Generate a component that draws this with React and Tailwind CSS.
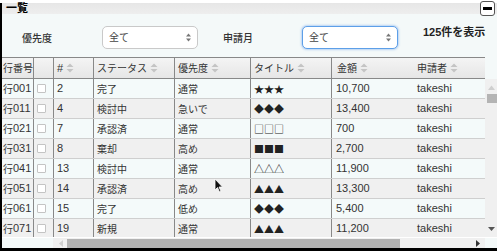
import React from "react";

const FONT = { fontFamily: '"Liberation Sans", "Noto Sans CJK JP", sans-serif' };
const CJK = { fontFamily: '"Noto Sans CJK JP", sans-serif' };

function SortIcon() {
  return (
    <svg width="8" height="10" viewBox="0 0 8 10" className="ml-[3px] shrink-0">
      <polygon points="0.5,4 4,0.5 7.5,4" fill="#c4c4c4" />
      <polygon points="0.5,6 4,9.5 7.5,6" fill="#c4c4c4" />
    </svg>
  );
}

function SelectBox({ focused }) {
  return (
    <div
      className={
        "w-[96px] h-[23px] rounded-[5px] bg-white flex items-center justify-between pl-[6px] pr-[6px] " +
        (focused
          ? "border border-[#5d9fe8] shadow-[0_0_2px_1px_rgba(110,165,235,0.45)]"
          : "border border-[#c9c9c9]")
      }
    >
      <span className="text-[10px] text-[#444]">全て</span>
      <svg width="5" height="9" viewBox="0 0 5 9">
        <polygon points="0,3.5 2.5,0.5 5,3.5" fill="#777" />
        <polygon points="0,5.5 2.5,8.5 5,5.5" fill="#777" />
      </svg>
    </div>
  );
}

const rows = [
  ["行001", "2", "完了", "通常", "★★★", "10,700"],
  ["行011", "4", "検討中", "急いで", "◆◆◆", "13,400"],
  ["行021", "7", "承認済", "通常", "□□□", "700"],
  ["行031", "8", "棄却", "高め", "■■■", "2,700"],
  ["行041", "13", "検討中", "通常", "△△△", "11,900"],
  ["行051", "14", "承認済", "高め", "▲▲▲", "13,300"],
  ["行061", "15", "完了", "低め", "◆◆◆", "5,400"],
  ["行071", "19", "新規", "通常", "▲▲▲", "11,200"],
];

export default function App() {
  return (
    <div
      className="w-[497px] h-[251px] bg-black flex flex-col overflow-hidden relative text-[#333] whitespace-nowrap"
      style={FONT}
    >
      <div className="h-[3px] bg-white shrink-0" />
      <div className="ml-[2px] h-[244px] bg-[#f4f9f9] flex flex-col relative">
        {/* title bar */}
        <div className="h-[11px] bg-gradient-to-b from-[#e6e6e6] to-[#eeeeee] flex items-center pl-[4px] shrink-0">
          <span className="text-[11px] font-bold leading-none text-black">一覧</span>
        </div>
        {/* minimize button */}
        <div className="absolute right-[2px] top-[-2px] w-[15px] h-[15px] rounded-[3px] border border-[#555] bg-white flex items-center justify-center">
          <div className="w-[9px] h-[3px] bg-black" />
        </div>

        {/* filters */}
        <div className="h-[43px] flex items-start pt-[12px] pl-[20px] shrink-0">
          <div className="w-[80px] h-[23px] flex items-center text-[10px] font-medium text-[#333]" style={CJK}>優先度</div>
          <SelectBox />
          <div className="ml-[25px] w-[79px] h-[23px] flex items-center text-[10px] font-medium text-[#333]" style={CJK}>申請月</div>
          <SelectBox focused />
          <div className="ml-[25px] text-[11px] font-bold leading-[12px] text-[#222]">125件を表示</div>
        </div>

        {/* table */}
        <div className="flex flex-col flex-1 min-h-0">
          {/* header */}
          <div className="flex shrink-0">
            <div className="w-[483px] h-[20px] flex border-t border-b border-[#888] bg-gradient-to-b from-[#f4f4f4] to-[#e6e6e6] text-[10px] box-content">
              <div className="w-[32px] border-r border-[#888] flex items-center pl-[1px]">行番号</div>
              <div className="w-[20px] border-r border-[#888]" />
              <div className="w-[40px] border-r border-[#888] flex items-center pl-[3px] text-[11px]">#<SortIcon /></div>
              <div className="w-[81px] border-r border-[#888] flex items-center pl-[3px]">ステータス<SortIcon /></div>
              <div className="w-[76px] border-r border-[#888] flex items-center pl-[3px]">優先度<SortIcon /></div>
              <div className="w-[81px] border-r border-[#888] flex items-center pl-[3px]">タイトル<SortIcon /></div>
              <div className="w-[81px] flex items-center pl-[5px]">金額<SortIcon /></div>
              <div className="flex-1 flex items-center pl-[4px]">申請者<SortIcon /></div>
            </div>
            <div className="w-[12px]" />
          </div>

          {/* body */}
          <div className="flex h-[158px] shrink-0">
            <div className="w-[483px] overflow-hidden text-[11px]">
              {rows.map((r, i) => (
                <div
                  key={i}
                  className={
                    "flex h-[20px] border-b border-[#cfcfcf] " +
                    (i % 2 === 0 ? "bg-[#f4fafa]" : "bg-[#f0f0f0]")
                  }
                >
                  <div className="w-[32px] border-r border-[#888] flex items-center pl-[1px]">
                    <span className="text-[10px]" style={CJK}>行</span>
                    <span>{r[0].slice(1)}</span>
                  </div>
                  <div className="w-[20px] border-r border-[#888] flex items-center pl-[3px]">
                    <div className="w-[9px] h-[9px] bg-white border border-[#c4c4c4] rounded-[1px]" />
                  </div>
                  <div className="w-[40px] border-r border-[#888] flex items-center pl-[3px]">{r[1]}</div>
                  <div className="w-[81px] border-r border-[#888] flex items-center pl-[3px] text-[10px]" style={CJK}>{r[2]}</div>
                  <div className="w-[76px] border-r border-[#888] flex items-center pl-[3px] text-[10px]" style={CJK}>{r[3]}</div>
                  <div className="w-[81px] border-r border-[#888] flex items-center pl-[3px] text-[10px] text-[#222]" style={CJK}>{r[4]}</div>
                  <div className="w-[81px] flex items-center pl-[4px]">{r[5]}</div>
                  <div className="flex-1 flex items-center pl-[4px]">takeshi</div>
                </div>
              ))}
            </div>
            {/* vertical scrollbar */}
            <div className="w-[12px] bg-[#f0f0f0] flex flex-col items-center pt-[6px]">
              <svg width="7" height="5" viewBox="0 0 7 5">
                <polygon points="0,5 3.5,0.5 7,5" fill="#cfcfcf" />
              </svg>
              <div className="mt-[4px] w-[10px] h-[9px] bg-[#b4b4b4] ml-[1px]" />
              <div className="flex-1" />
              <svg width="7" height="4" viewBox="0 0 7 4" className="mb-[6px]">
                <polygon points="0,0 3.5,4 7,0" fill="#555" />
              </svg>
            </div>
          </div>

          {/* horizontal scrollbar */}
          <div className="flex h-[11px] shrink-0 border-t border-white">
            <div className="w-[51px] bg-[#f4f9f9]" />
            <div className="w-[432px] bg-[#f0f0f0] flex items-center pl-[6px]">
              <svg width="4" height="7" viewBox="0 0 4 7">
                <polygon points="4,0 0,3.5 4,7" fill="#cfcfcf" />
              </svg>
              <div className="ml-[4px] w-[333px] h-[9px] bg-[#b2b2b2]" />
              <div className="flex-1" />
              <svg width="4" height="7" viewBox="0 0 4 7" className="mr-[5px]">
                <polygon points="0,0 4,3.5 0,7" fill="#333" />
              </svg>
            </div>
            <div className="w-[12px] bg-[#f4f9f9]" />
          </div>
        </div>
      </div>

      {/* mouse cursor */}
      <svg
        width="10"
        height="15"
        viewBox="0 0 10 15"
        className="absolute left-[214px] top-[178px]"
      >
        <polygon points="1,1 1,12 3.5,9.5 5.5,14 7,13.3 5,9 8.5,9" fill="#111" stroke="#fff" strokeWidth="0.8" />
      </svg>
    </div>
  );
}
